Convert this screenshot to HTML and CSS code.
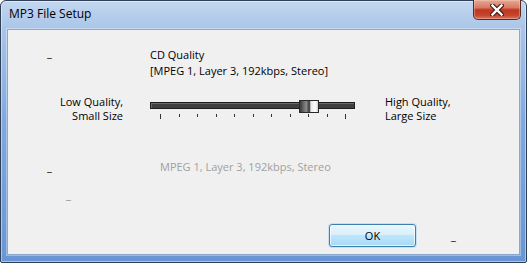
FILE: index.html
```html
<!DOCTYPE html>
<html>
<head>
  <meta charset='utf8'>
  <title>MP3 File Setup</title>
  <link rel="stylesheet" href="styles.css">
</head>
<body>
  <div class='window'>
    <div class='titlebar'>
      <span class='title'>MP3 File Setup</span>
      <button class='close' title='Close'>
        <svg width='14' height='12' viewBox='0 0 14 12'>
          <path d='M2.5 1.5 L11.5 10.5 M11.5 1.5 L2.5 10.5' stroke='#4a1c14' stroke-width='4.6' stroke-linecap='square' fill='none'/>
          <path d='M2.5 1.5 L11.5 10.5 M11.5 1.5 L2.5 10.5' stroke='#fff' stroke-width='2.4' stroke-linecap='square' fill='none'/>
        </svg>
      </button>
    </div>

    <div class='client'>
      <div class='row head'>
        <span class='mark'>_</span>
        <div class='quality'>
          <div>CD Quality</div>
          <div>[MPEG 1, Layer 3, 192kbps, Stereo]</div>
        </div>
      </div>

      <div class='row slider-row'>
        <div class='end low'>Low Quality,<br>Small Size</div>
        <div class='slider'>
          <div class='track'>
            <!-- value 8 of 10 -->
            <div class='thumb' style='left: 148px'></div>
          </div>
          <div class='ticks'>
            <i class='long'></i><i></i><i></i><i></i><i></i><i></i><i></i><i></i><i></i><i></i><i class='long'></i>
          </div>
        </div>
        <div class='end high'>High Quality,<br>Large Size</div>
      </div>

      <div class='row status'>
        <span class='mark'>_</span>
        <span class='format'>MPEG 1, Layer 3, 192kbps, Stereo</span>
      </div>

      <div class='row spare'>
        <span class='mark dim'>_</span>
      </div>

      <div class='row footer'>
        <button class='ok'>OK</button>
        <span class='mark'>_</span>
      </div>
    </div>
  </div>
</body>
</html>
```

FILE: styles.css
```css
html, body {
  margin: 0;
  padding: 0;
  background: #fff;
}
body {
  font-family: "Open Sans", "Noto Sans", sans-serif;
  font-size: 11px;
  color: #000;
}
.window {
  box-sizing: border-box;
  width: 527px;
  height: 263px;
  border: 1px solid #2e3f57;
  border-radius: 6px 6px 2px 2px;
  background: linear-gradient(#c3d7ef, #a9c5e8 28px, #82a9de 45%, #6896d4);
  box-shadow: inset 0 0 0 1px rgba(255,255,255,.45);
  padding: 0 6px;
}
.titlebar {
  height: 28px;
  display: flex;
  align-items: flex-start;
}
.title {
  font-size: 12px;
  line-height: 16px;
  margin: 5px 0 0 2px;
  color: #000;
}
.close {
  margin: -1px -1px 0 auto;
  width: 48px;
  height: 20px;
  padding: 0;
  border: 1px solid #5a2a22;
  border-top: 0;
  border-radius: 0 0 5px 5px;
  background: linear-gradient(#e7a995, #d67a64 40%, #c1361f 52%, #c6442d 80%, #d87862);
  box-shadow: inset 0 0 0 1px rgba(255,220,210,.35);
  display: flex;
  align-items: center;
  justify-content: center;
}
.client {
  box-sizing: border-box;
  height: 226px;
  border: 1px solid #8ba7cc;
  background: #f0f0f0;
  box-shadow: 0 0 0 1px rgba(255,255,255,.35);
}
.row {
  line-height: 16px;
}
.mark {
  padding-left: 39px;
}
.dim {
  color: #8c8c8c;
}
.head {
  display: grid;
  grid-template-columns: 142px auto;
  margin-top: 17px;
}
.head .mark {
  margin-top: -2px;
}
.slider-row {
  display: flex;
  align-items: flex-start;
  margin-top: 16px;
  line-height: 14px;
}
.end {
  white-space: nowrap;
}
.low {
  width: 115px;
  text-align: right;
  margin-right: 27px;
}
.high {
  margin-left: 30px;
}
.slider {
  width: 205px;
}
.track {
  position: relative;
  box-sizing: border-box;
  margin-top: 7px;
  height: 7px;
  background: #404040;
  border: 1px solid #1e1e1e;
  box-shadow: inset 1px 1px 0 #6a6a6a;
}
.thumb {
  position: absolute;
  top: -3px;
  box-sizing: border-box;
  width: 20px;
  height: 13px;
  border: 1px solid #2a2a2a;
  background: linear-gradient(90deg, #3a3a3a, #8a8a8a 35%, #4a4a4a 48%, #4a4a4a 54%, #e8e8e8 60%, #ffffff 85%, #d0d0d0);
}
.ticks {
  display: flex;
  justify-content: space-between;
  align-items: flex-start;
  padding: 0 9px 0 10px;
  margin-top: 5px;
}
.ticks i {
  width: 1px;
  height: 3px;
  background: #333;
}
.ticks i.long {
  height: 5px;
}
.status {
  display: grid;
  grid-template-columns: 152px auto;
  margin-top: 36px;
}
.format {
  color: #a0a0a0;
}
.spare {
  margin-top: 12px;
}
.spare .mark {
  padding-left: 58px;
}
.footer {
  display: flex;
  align-items: flex-start;
  margin-top: 21px;
  padding-left: 321px;
}
.ok {
  box-sizing: border-box;
  width: 87px;
  height: 23px;
  padding: 0;
  font: inherit;
  color: #000;
  border: 1px solid #3c7fb1;
  border-radius: 3px;
  background: linear-gradient(#eaf6fd, #d9f0fc 45%, #bee6fd 50%, #a7d9f5);
  box-shadow: inset 0 0 0 1px rgba(255,255,255,.7), 0 0 0 1px rgba(140,200,240,.4);
}
.footer .mark {
  padding-left: 35px;
  margin-top: 4px;
}
```
